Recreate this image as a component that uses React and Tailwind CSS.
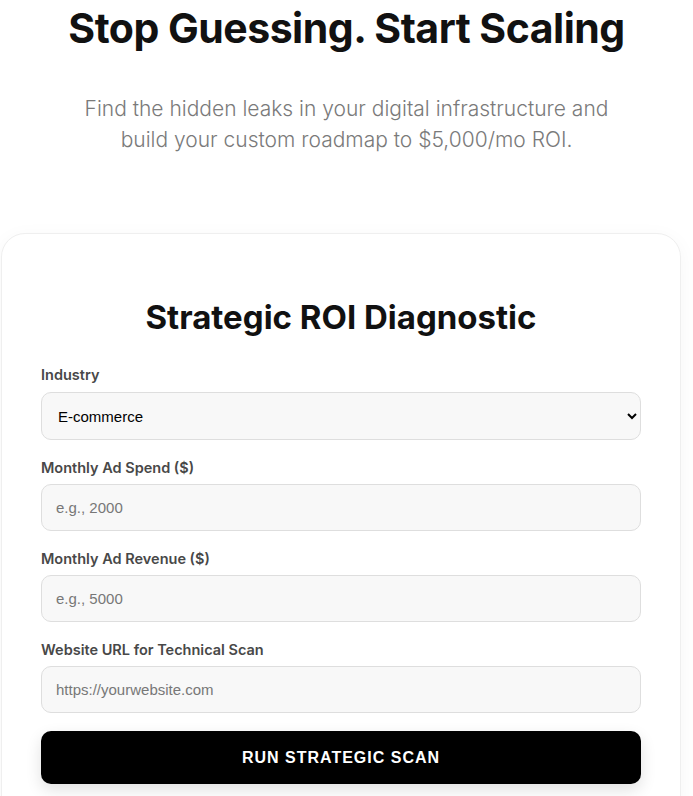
export default function App() {
  return (
    <div className="min-h-screen bg-white overflow-hidden" style={{ fontFamily: 'Inter, "Noto Sans", sans-serif' }}>
      {/* hero */}
      <div className="flex flex-col items-center text-center">
        <h1 className="mt-[-2px] text-[41px] leading-[60px] font-bold tracking-[-0.5px] text-[#111]">
          Stop Guessing. Start Scaling
        </h1>
        <p className="mt-[35px] w-[560px] text-[21px] leading-[31px] font-light text-[#7a7a7a]">
          Find the hidden leaks in your digital infrastructure and build your custom roadmap to $5,000/mo ROI.
        </p>
      </div>

      {/* diagnostic card */}
      <div className="mt-[78px] ml-[1px] w-[680px] rounded-[24px] border border-[#efefef] bg-white px-[39px] pt-[61px] pb-10 shadow-[0_4px_20px_rgba(0,0,0,0.04)]">
        <h2 className="text-center text-[33px] leading-[44px] font-bold text-[#111]">
          Strategic ROI Diagnostic
        </h2>

        <form className="mt-[26px] flex flex-col gap-[18px]" onSubmit={(e) => e.preventDefault()}>
          <div className="flex flex-col">
            <label className="mb-[7px] text-[14.5px] leading-5 font-semibold text-[#484848]">Industry</label>
            <select
              defaultValue="E-commerce"
              className="h-[48px] rounded-[10px] border border-[#dedede] bg-[#f8f8f8] px-3 text-[15px] text-black"
              style={{ fontFamily: '"Liberation Sans", Arial, sans-serif' }}
            >
              <option>E-commerce</option>
              <option>SaaS</option>
              <option>Local Services</option>
            </select>
          </div>

          <div className="flex flex-col">
            <label className="mb-[6px] text-[14.5px] leading-5 font-semibold text-[#484848]">Monthly Ad Spend ($)</label>
            <input
              placeholder="e.g., 2000"
              className="h-[47px] rounded-[10px] border border-[#dedede] bg-[#f8f8f8] px-[14px] text-[15px] placeholder:text-[#777]"
              style={{ fontFamily: '"Liberation Sans", Arial, sans-serif' }}
            />
          </div>

          <div className="flex flex-col">
            <label className="mb-[6px] text-[14.5px] leading-5 font-semibold text-[#484848]">Monthly Ad Revenue ($)</label>
            <input
              placeholder="e.g., 5000"
              className="h-[47px] rounded-[10px] border border-[#dedede] bg-[#f8f8f8] px-[14px] text-[15px] placeholder:text-[#777]"
              style={{ fontFamily: '"Liberation Sans", Arial, sans-serif' }}
            />
          </div>

          <div className="flex flex-col">
            <label className="mb-[6px] text-[14.5px] leading-5 font-semibold text-[#484848]">Website URL for Technical Scan</label>
            <input
              placeholder="https://yourwebsite.com"
              className="h-[47px] rounded-[10px] border border-[#dedede] bg-[#f8f8f8] px-[14px] text-[15px] placeholder:text-[#777]"
              style={{ fontFamily: '"Liberation Sans", Arial, sans-serif' }}
            />
          </div>

          <button
            type="submit"
            className="mt-0 h-[53px] rounded-[10px] bg-black text-[16px] font-bold tracking-[1px] text-white shadow-[0_6px_16px_rgba(0,0,0,0.12)]"
            style={{ fontFamily: '"Liberation Sans", Arial, sans-serif' }}
          >
            RUN STRATEGIC SCAN
          </button>
        </form>
      </div>
    </div>
  );
}
